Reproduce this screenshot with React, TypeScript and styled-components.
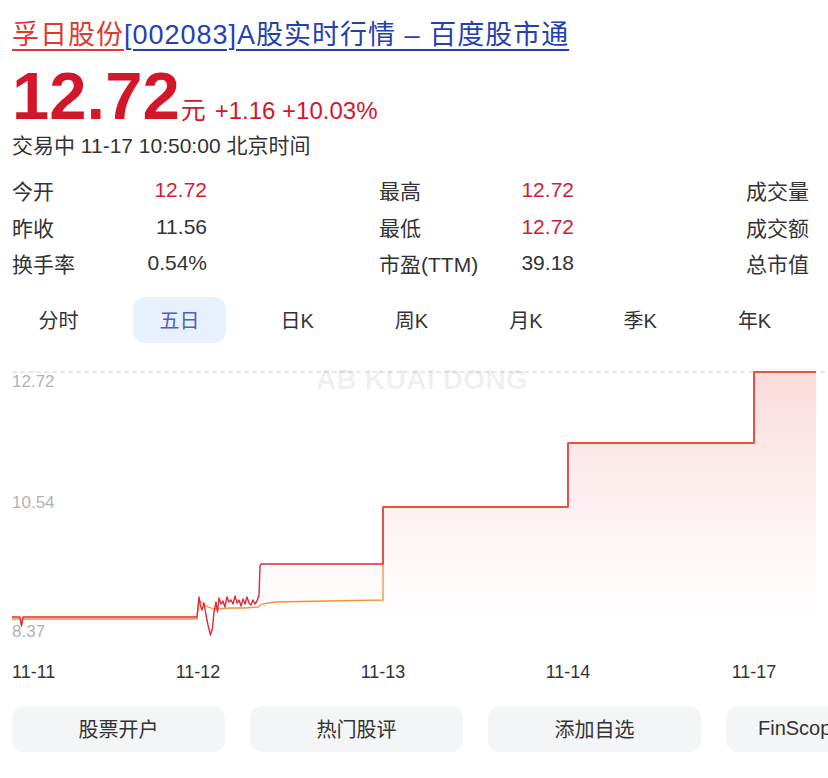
import React from "react";
import styled, { createGlobalStyle } from "styled-components";

const Global = createGlobalStyle`
  html, body { margin: 0; padding: 0; background: #fff; }
  body { overflow: hidden; font-family: "Liberation Sans", "Noto Sans CJK SC", sans-serif; color: #333; }
`;

const Page = styled.div`
  width: 828px;
  height: 778px;
  overflow: hidden;
  padding: 0 0 0 12px;
  box-sizing: border-box;
`;

const Title = styled.h1`
  margin: 18px 0 0;
  font-size: 27px;
  line-height: 34px;
  font-weight: 400;
  letter-spacing: 1px;
  white-space: nowrap;
`;

const TitleLink = styled.span<{ $tone: "red" | "blue" }>`
  color: ${(p) => (p.$tone === "red" ? "#dd3a32" : "#2440b3")};
  text-decoration: underline;
  text-decoration-thickness: 1.5px;
  text-underline-offset: 5px;
`;

const PriceRow = styled.div`
  margin-top: 12px;
  display: flex;
  align-items: baseline;
  color: #d3172b;
  height: 64px;
  white-space: pre;
`;

const BigPrice = styled.span`
  font-size: 67px;
  line-height: 64px;
  font-weight: 700;
`;

const Unit = styled.span`
  font-size: 25px;
  margin: 0 9px 0 1px;
`;

const Change = styled.span`
  font-size: 24px;
`;

const Status = styled.div`
  margin-top: 4px;
  font-size: 21px;
  line-height: 28px;
  color: #333;
`;

const StatsGrid = styled.div`
  margin-top: 12px;
  display: grid;
  grid-template-columns: repeat(3, 195px);
  column-gap: 172px;
  grid-auto-rows: 36.5px;
`;

const Stat = styled.div`
  display: flex;
  justify-content: space-between;
  align-items: center;
  font-size: 21px;
  white-space: nowrap;
`;

const StatLabel = styled.span`
  color: #333;
`;

const StatValue = styled.span<{ $up?: boolean }>`
  color: ${(p) => (p.$up ? "#cf1d35" : "#333")};
`;

const Tabs = styled.div`
  margin-top: 15px;
  display: flex;
  gap: 28px;
  height: 46px;
`;

const Tab = styled.div<{ $active?: boolean }>`
  padding: 0 26.5px;
  display: flex;
  align-items: center;
  border-radius: 12px;
  font-size: 20px;
  color: ${(p) => (p.$active ? "#4f5fbf" : "#333")};
  background: ${(p) => (p.$active ? "#e8f1fe" : "transparent")};
`;

const ChartWrap = styled.div`
  margin: 7px 0 0 -12px;
  height: 340px;
  position: relative;
`;

const Watermark = styled.div`
  position: absolute;
  left: 316px;
  top: 14px;
  font-size: 28px;
  font-weight: 700;
  color: rgba(0, 0, 0, 0.065);
  letter-spacing: 0.3px;
  pointer-events: none;
`;

const Buttons = styled.div`
  margin-top: 16px;
  display: flex;
  gap: 25px;
`;

const ActionButton = styled.div<{ $fit?: boolean }>`
  flex: 0 0 auto;
  width: ${(p) => (p.$fit ? "auto" : "213px")};
  padding: 0 32px;
  box-sizing: border-box;
  height: 46px;
  border-radius: 12px;
  background: #f4f5f7;
  display: flex;
  align-items: center;
  justify-content: center;
  font-size: 20px;
  color: #333;
  white-space: nowrap;
`;

const redPath =
  "M12,267 L20,267 L21.5,276 L23,267 L197,267 L199,247 L200.5,256 L202,260 L204,253 L206,265 L208,275 L210.5,285 L212.5,278 L214,262 L216,252 L217.5,262 L219,248 L221,254 L223,251 L225,257 L227,247 L229,252 L231,250 L233,254 L235,246 L237,253 L239,250 L241,256 L243,249 L245,254 L247,247 L249,253 L251,255 L253,250 L255,254 L257,251 L259,245 L260,216 L261,214 L383,214 L383,157 L568,157 L568,93 L754,93 L754,22 L816,22";

const orangePath =
  "M12,269 L20,269 L21.5,275 L23,269 L197,269 L199,250 L203,254 L208,257 L215,259 L230,258 L245,258 L258,257 L262,254 L275,252 L300,251.5 L383,250 L383,157 L568,157 L568,93 L754,93 L754,22 L816,22";

const Chart = () => (
  <svg width="828" height="340" viewBox="0 0 828 340">
    <defs>
      <linearGradient id="fill" x1="0" y1="22" x2="0" y2="305" gradientUnits="userSpaceOnUse">
        <stop offset="0" stopColor="#ee4a4a" stopOpacity="0.2" />
        <stop offset="0.6" stopColor="#f07070" stopOpacity="0.07" />
        <stop offset="1" stopColor="#ffffff" stopOpacity="0" />
      </linearGradient>
    </defs>
    <path d={redPath + " L816,305 L12,305 Z"} fill="url(#fill)" />
    <line x1="12" y1="22" x2="828" y2="22" stroke="#d2d2d2" strokeWidth="1" strokeDasharray="5 3" />
    <path d={orangePath} fill="none" stroke="#f0913c" strokeWidth="1.3" />
    <path d={redPath} fill="none" stroke="#dc2a3a" strokeWidth="1.4" strokeLinejoin="round" />
    <path d="M754,22 L816,22 M383,157 L568,157 M568,93 L754,93" fill="none" stroke="#e0583a" strokeWidth="2" />
    <g fontFamily="Liberation Sans, sans-serif" fontSize="17" fill="#b3b3b3">
      <text x="12" y="37">12.72</text>
      <text x="12" y="158">10.54</text>
      <text x="12" y="287">8.37</text>
    </g>
    <g fontFamily="Liberation Sans, sans-serif" fontSize="18" fill="#333">
      <text x="12" y="328">11-11</text>
      <text x="198" y="328" textAnchor="middle">11-12</text>
      <text x="383" y="328" textAnchor="middle">11-13</text>
      <text x="568" y="328" textAnchor="middle">11-14</text>
      <text x="754" y="328" textAnchor="middle">11-17</text>
    </g>
  </svg>
);

const stats: { label: string; value: string; up?: boolean }[] = [
  { label: "今开", value: "12.72", up: true },
  { label: "最高", value: "12.72", up: true },
  { label: "成交量", value: "" },
  { label: "昨收", value: "11.56" },
  { label: "最低", value: "12.72", up: true },
  { label: "成交额", value: "" },
  { label: "换手率", value: "0.54%" },
  { label: "市盈(TTM)", value: "39.18" },
  { label: "总市值", value: "" },
];

const tabs = ["分时", "五日", "日K", "周K", "月K", "季K", "年K"];
const actions = ["股票开户", "热门股评", "添加自选", "FinScope"];

export default function App() {
  return (
    <>
      <Global />
      <Page>
        <Title>
          <TitleLink $tone="red">孚日股份</TitleLink>
          <TitleLink $tone="blue">[002083]A股实时行情 – 百度股市通</TitleLink>
        </Title>
        <PriceRow>
          <BigPrice>12.72</BigPrice>
          <Unit>元</Unit>
          <Change>+1.16 +10.03%</Change>
        </PriceRow>
        <Status>交易中 11-17 10:50:00 北京时间</Status>
        <StatsGrid>
          {stats.map((s) => (
            <Stat key={s.label}>
              <StatLabel>{s.label}</StatLabel>
              <StatValue $up={s.up}>{s.value}</StatValue>
            </Stat>
          ))}
        </StatsGrid>
        <Tabs>
          {tabs.map((t) => (
            <Tab key={t} $active={t === "五日"}>
              {t}
            </Tab>
          ))}
        </Tabs>
        <ChartWrap>
          <Chart />
          <Watermark>AB KUAI DONG</Watermark>
        </ChartWrap>
        <Buttons>
          {actions.map((a, i) => (
            <ActionButton key={a} $fit={i === actions.length - 1}>
              {a}
            </ActionButton>
          ))}
        </Buttons>
      </Page>
    </>
  );
}
